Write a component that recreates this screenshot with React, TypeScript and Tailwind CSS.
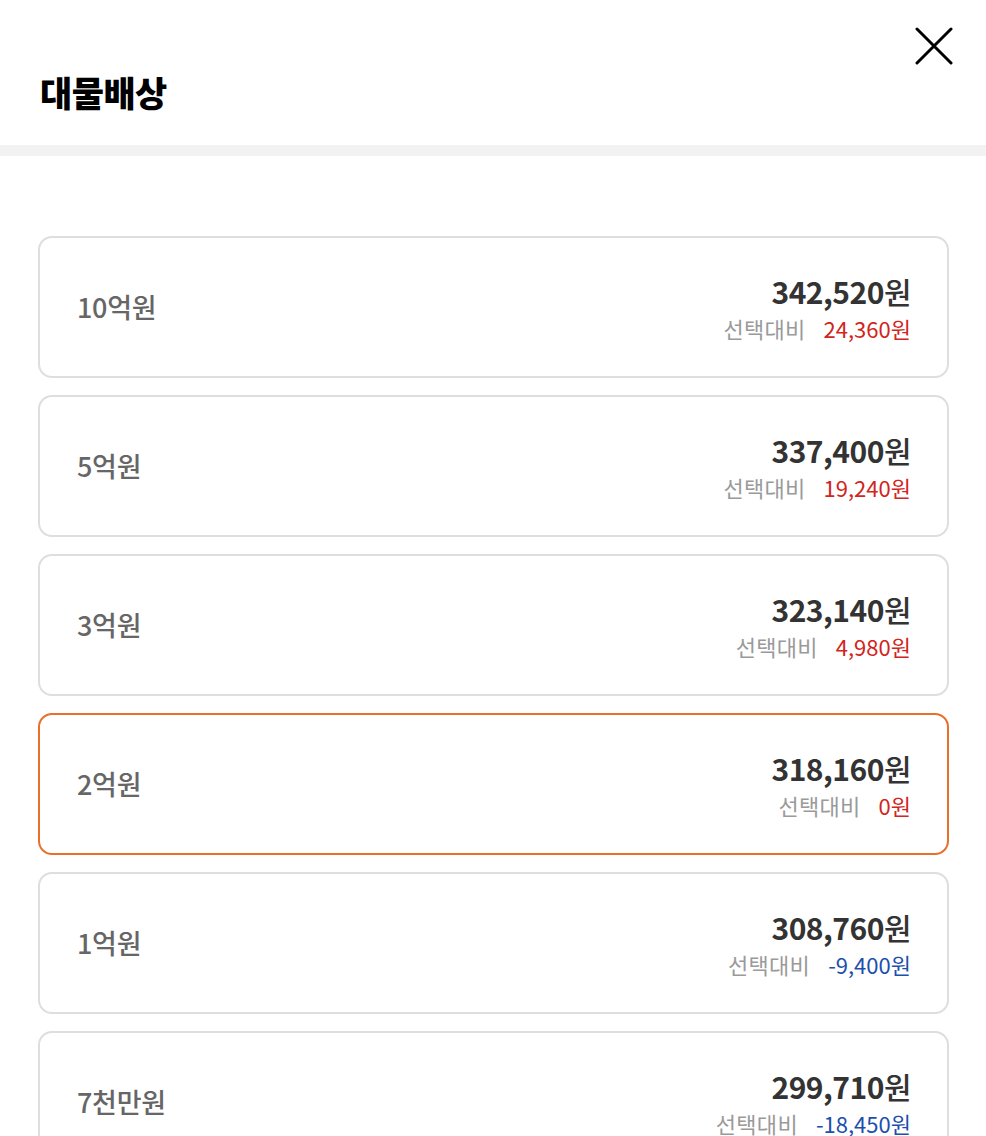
import React from "react";

type Option = {
  label: string;
  price: string;
  diff: string;
  tone: "up" | "zero" | "down";
  selected?: boolean;
};

const options: Option[] = [
  { label: "10억원", price: "342,520", diff: "24,360원", tone: "up" },
  { label: "5억원", price: "337,400", diff: "19,240원", tone: "up" },
  { label: "3억원", price: "323,140", diff: "4,980원", tone: "up" },
  { label: "2억원", price: "318,160", diff: "0원", tone: "zero", selected: true },
  { label: "1억원", price: "308,760", diff: "-9,400원", tone: "down" },
  { label: "7천만원", price: "299,710", diff: "-18,450원", tone: "down" },
];

const OptionCard = ({ option }: { option: Option }) => {
  return (
    <div
      className={
        option.selected
          ? "flex items-center justify-between h-[142px] rounded-[14px] border-2 border-[#e8702a] bg-white pl-[37px] pr-[36px]"
          : "flex items-center justify-between h-[142px] rounded-[14px] border-2 border-[#dedede] bg-white pl-[37px] pr-[36px]"
      }
    >
      <span className="text-[27px] font-medium text-[#666666] tracking-[-0.3px]">
        {option.label}
      </span>
      <div className="flex flex-col items-end pt-[2px]">
        <span className="text-[30px] leading-[38px] font-bold text-[#333333] tracking-[-0.5px]">
          {option.price}
          <span className="font-medium">원</span>
        </span>
        <div className="flex items-center gap-[18px] text-[22px] leading-[32px] mt-[2px]">
          <span className="text-[#9a9a9a] tracking-[0.3px]">선택대비</span>
          <span
            className={
              option.tone === "down" ? "text-[#1d4fae]" : "text-[#d2251c]"
            }
          >
            {option.diff}
          </span>
        </div>
      </div>
    </div>
  );
};

export default function App() {
  return (
    <div
      className="w-[986px] h-[1136px] overflow-hidden bg-white"
      style={{ fontFamily: '"Noto Sans CJK KR", "Noto Sans", sans-serif' }}
    >
      <header className="relative h-[145px] flex items-center pl-[40px]">
        <h1 className="text-[35px] font-black text-black tracking-[-0.5px] mt-[40px]">
          대물배상
        </h1>
        <button className="absolute right-[32px] top-[26px] w-[40px] h-[40px] flex items-center justify-center">
          <svg width="38" height="38" viewBox="0 0 38 38" fill="none">
            <path
              d="M2 2 L36 36 M36 2 L2 36"
              stroke="#000"
              strokeWidth="3"
              strokeLinecap="round"
            />
          </svg>
        </button>
      </header>
      <div className="h-[11px] bg-[#f2f2f2]" />
      <div className="flex flex-col gap-[17px] pl-[38px] pr-[37px] pt-[80px]">
        {options.map((o) => (
          <OptionCard key={o.label} option={o} />
        ))}
      </div>
    </div>
  );
}
